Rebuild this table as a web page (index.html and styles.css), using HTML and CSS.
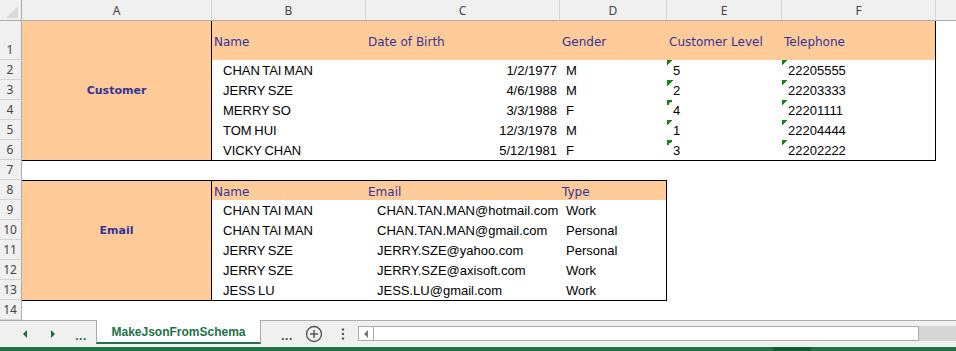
FILE: index.html
```html
<!DOCTYPE html>
<html lang="en">
<head>
    <meta charset="UTF-8">
    <title>MakeJsonFromSchema</title>
    <link rel="stylesheet" href="styles.css">
</head>
<body>

    <div class="sheet">
        <!-- column headers -->
        <div class="corner"><svg width="21" height="20" viewBox="0 0 21 20"><polygon points="18,6 18,18 6,18" fill="#d9d9d9"/></svg></div>
        <div class="ch">A</div>
        <div class="ch">B</div>
        <div class="ch">C</div>
        <div class="ch">D</div>
        <div class="ch">E</div>
        <div class="ch">F</div>
        <div class="ch ch-last"></div>

        <!-- row 1 -->
        <div class="rn">1</div>
        <div class="cell label span6">Customer</div>
        <div class="cell hd tall">Name</div>
        <div class="cell hd tall">Date of Birth</div>
        <div class="cell hd tall">Gender</div>
        <div class="cell hd tall">Customer Level</div>
        <div class="cell hd tall edge-r">Telephone</div>
        <div class="cell"></div>

        <div class="rn">2</div>
        <div class="cell txt">CHAN TAI MAN</div>
        <div class="cell num">1/2/1977</div>
        <div class="cell code">M</div>
        <div class="cell code flag">5</div>
        <div class="cell code flag edge-r">22205555</div>
        <div class="cell"></div>

        <div class="rn">3</div>
        <div class="cell txt">JERRY SZE</div>
        <div class="cell num">4/6/1988</div>
        <div class="cell code">M</div>
        <div class="cell code flag">2</div>
        <div class="cell code flag edge-r">22203333</div>
        <div class="cell"></div>

        <div class="rn">4</div>
        <div class="cell txt">MERRY SO</div>
        <div class="cell num">3/3/1988</div>
        <div class="cell code">F</div>
        <div class="cell code flag">4</div>
        <div class="cell code flag edge-r">22201111</div>
        <div class="cell"></div>

        <div class="rn">5</div>
        <div class="cell txt">TOM HUI</div>
        <div class="cell num">12/3/1978</div>
        <div class="cell code">M</div>
        <div class="cell code flag">1</div>
        <div class="cell code flag edge-r">22204444</div>
        <div class="cell"></div>

        <div class="rn">6</div>
        <div class="cell txt">VICKY CHAN</div>
        <div class="cell num">5/12/1981</div>
        <div class="cell code">F</div>
        <div class="cell code flag">3</div>
        <div class="cell code flag edge-r">22202222</div>
        <div class="cell"></div>

        <!-- row 7 -->
        <div class="rn">7</div>
        <div class="cell edge-t"></div>
        <div class="cell edge-t"></div>
        <div class="cell edge-t"></div>
        <div class="cell edge-t"></div>
        <div class="cell edge-t"></div>
        <div class="cell edge-t"></div>
        <div class="cell"></div>

        <!-- row 8 -->
        <div class="rn">8</div>
        <div class="cell label span6 edge-t email-label">Email</div>
        <div class="cell hd edge-t">Name</div>
        <div class="cell hd edge-t">Email</div>
        <div class="cell hd edge-t edge-r">Type</div>
        <div class="cell"></div>
        <div class="cell"></div>
        <div class="cell"></div>

        <div class="rn">9</div>
        <div class="cell txt">CHAN TAI MAN</div>
        <div class="cell txt">CHAN.TAN.MAN@hotmail.com</div>
        <div class="cell code edge-r">Work</div>
        <div class="cell"></div>
        <div class="cell"></div>
        <div class="cell"></div>

        <div class="rn">10</div>
        <div class="cell txt">CHAN TAI MAN</div>
        <div class="cell txt">CHAN.TAN.MAN@gmail.com</div>
        <div class="cell code edge-r">Personal</div>
        <div class="cell"></div>
        <div class="cell"></div>
        <div class="cell"></div>

        <div class="rn">11</div>
        <div class="cell txt">JERRY SZE</div>
        <div class="cell txt">JERRY.SZE@yahoo.com</div>
        <div class="cell code edge-r">Personal</div>
        <div class="cell"></div>
        <div class="cell"></div>
        <div class="cell"></div>

        <div class="rn">12</div>
        <div class="cell txt">JERRY SZE</div>
        <div class="cell txt">JERRY.SZE@axisoft.com</div>
        <div class="cell code edge-r">Work</div>
        <div class="cell"></div>
        <div class="cell"></div>
        <div class="cell"></div>

        <div class="rn">13</div>
        <div class="cell txt">JESS LU</div>
        <div class="cell txt">JESS.LU@gmail.com</div>
        <div class="cell code edge-r">Work</div>
        <div class="cell"></div>
        <div class="cell"></div>
        <div class="cell"></div>

        <!-- row 14 -->
        <div class="rn">14</div>
        <div class="cell edge-t"></div>
        <div class="cell edge-t"></div>
        <div class="cell edge-t"></div>
        <div class="cell edge-t"></div>
        <div class="cell"></div>
        <div class="cell"></div>
        <div class="cell"></div>
    </div>

    <!-- Sheet tabs -->
    <div class="sheet-tabs">
        <div class="tab-nav">
            <span class="nav-btn"><svg width="6" height="8" viewBox="0 0 6 8"><polygon points="5,0 5,8 1,4" fill="#1d6b3c"/></svg></span>
            <span class="nav-btn"><svg width="6" height="8" viewBox="0 0 6 8"><polygon points="1,0 1,8 5,4" fill="#1d6b3c"/></svg></span>
            <span class="nav-btn dots green">...</span>
        </div>
        <div class="tab active">MakeJsonFromSchema</div>
        <span class="nav-btn dots more">...</span>
        <span class="nav-btn add"><svg width="18" height="18" viewBox="0 0 18 18"><circle cx="9" cy="9" r="7.5" fill="none" stroke="#555" stroke-width="1.4"/><path d="M9 5v8M5 9h8" stroke="#555" stroke-width="1.5"/></svg></span>
        <span class="nav-btn vdots"><svg width="4" height="14" viewBox="0 0 4 14"><circle cx="2" cy="2.5" r="1.2" fill="#555"/><circle cx="2" cy="7" r="1.2" fill="#555"/><circle cx="2" cy="11.5" r="1.2" fill="#555"/></svg></span>
        <div class="hscroll">
            <span class="scroll-arrow"><svg width="5" height="8" viewBox="0 0 5 8"><polygon points="4,0 4,8 0,4" fill="#777"/></svg></span>
        </div>
        <div class="scroll-end"></div>
    </div>
    <div class="status-line"><span class="status-mark"></span></div>

</body>
</html>
```

FILE: styles.css
```css
* {
    box-sizing: border-box;
}

body {
    margin: 0;
    width: 956px;
    height: 351px;
    overflow: hidden;
    background: white;
    font-family: 'Liberation Sans', Arial, sans-serif;
}

/* Grid */
.sheet {
    display: grid;
    grid-template-columns: 22px 190px 154px 194px 107px 115px 154px 1fr;
    grid-template-rows: 21px 39px repeat(13, 20px);
}

.corner {
    background-color: #f0f0f0;
    border-right: 1px solid #ababab;
    border-bottom: 1px solid #ababab;
}

.corner svg {
    display: block;
}

.ch {
    background-color: #f0f0f0;
    border-right: 1px solid #d4d4d4;
    border-bottom: 1px solid #ababab;
    display: flex;
    align-items: center;
    justify-content: center;
    font-family: 'Noto Sans', sans-serif;
    font-size: 12px;
    color: #444;
    padding-top: 1px;
}

.ch-last {
    border-right: none;
}

.rn {
    background-color: #f0f0f0;
    border-right: 1px solid #ababab;
    border-bottom: 1px solid #d4d4d4;
    display: flex;
    align-items: flex-end;
    justify-content: center;
    font-family: 'Noto Sans', sans-serif;
    font-size: 12px;
    color: #444;
    line-height: 18px;
    padding-right: 1px;
}

.cell {
    display: flex;
    align-items: center;
    white-space: nowrap;
    font-size: 13px;
    color: #000;
    word-spacing: -1px;
}

.label {
    grid-row: span 6;
    background-color: #ffcc99;
    border-right: 1px solid #000;
    justify-content: center;
    font-family: 'DejaVu Sans', Verdana, sans-serif;
    font-weight: bold;
    font-size: 11px;
    color: #333399;
    word-spacing: 0;
}

.email-label {
    padding-bottom: 20px;
}

.hd {
    background-color: #ffcc99;
    font-family: 'DejaVu Sans', Verdana, sans-serif;
    font-size: 12px;
    color: #333399;
    padding-left: 2px;
    padding-top: 2px;
    word-spacing: 0;
}

.hd.tall {
    padding-top: 3px;
}

.txt {
    padding-left: 11px;
}

.num {
    justify-content: flex-end;
    padding-right: 3px;
}

.code {
    padding-left: 6px;
}

.flag {
    background: linear-gradient(135deg, #0c8a0c 50%, transparent 50%) no-repeat 0 0 / 6px 6px;
}

.edge-t {
    border-top: 1px solid #000;
}

.edge-r {
    border-right: 1px solid #000;
}

/* Sheet tabs */
.sheet-tabs {
    display: flex;
    height: 27px;
    background-color: #f0f0f0;
    border-top: 1px solid #ababab;
}

.tab-nav {
    width: 96px;
    display: flex;
    padding-left: 11px;
}

.nav-btn {
    width: 28px;
    display: flex;
    align-items: center;
    justify-content: center;
}

.dots {
    font-family: 'Liberation Sans', Arial, sans-serif;
    font-weight: bold;
    font-size: 12px;
    letter-spacing: 0.5px;
    padding-top: 3px;
}

.dots.green {
    color: #1d6b3c;
}

.dots.more {
    color: #444;
    width: 26px;
    margin-left: 13px;
}

.vdots {
    width: 30px;
}

.tab {
    width: 165px;
    margin-top: -1px;
    margin-bottom: 3px;
    background: white;
    border-left: 1px solid #ababab;
    border-right: 1px solid #ababab;
    border-bottom: 2px solid #217346;
    display: flex;
    align-items: center;
    justify-content: center;
    font-weight: bold;
    font-size: 12px;
    color: #217346;
    padding-top: 2px;
}

.hscroll {
    flex: 1;
    margin: 5px 0 6px;
    background: white;
    border: 1px solid #ababab;
    display: flex;
}

.scroll-arrow {
    width: 15px;
    border-right: 1px solid #ababab;
    display: flex;
    align-items: center;
    justify-content: center;
}

.scroll-end {
    width: 37px;
    margin: 5px 0 6px;
    background-color: #d6d6d6;
}

.status-line {
    height: 4px;
    background-color: #217346;
    display: flex;
}

.status-mark {
    margin-left: 773px;
    width: 38px;
    background-color: #0f5a31;
}
```
